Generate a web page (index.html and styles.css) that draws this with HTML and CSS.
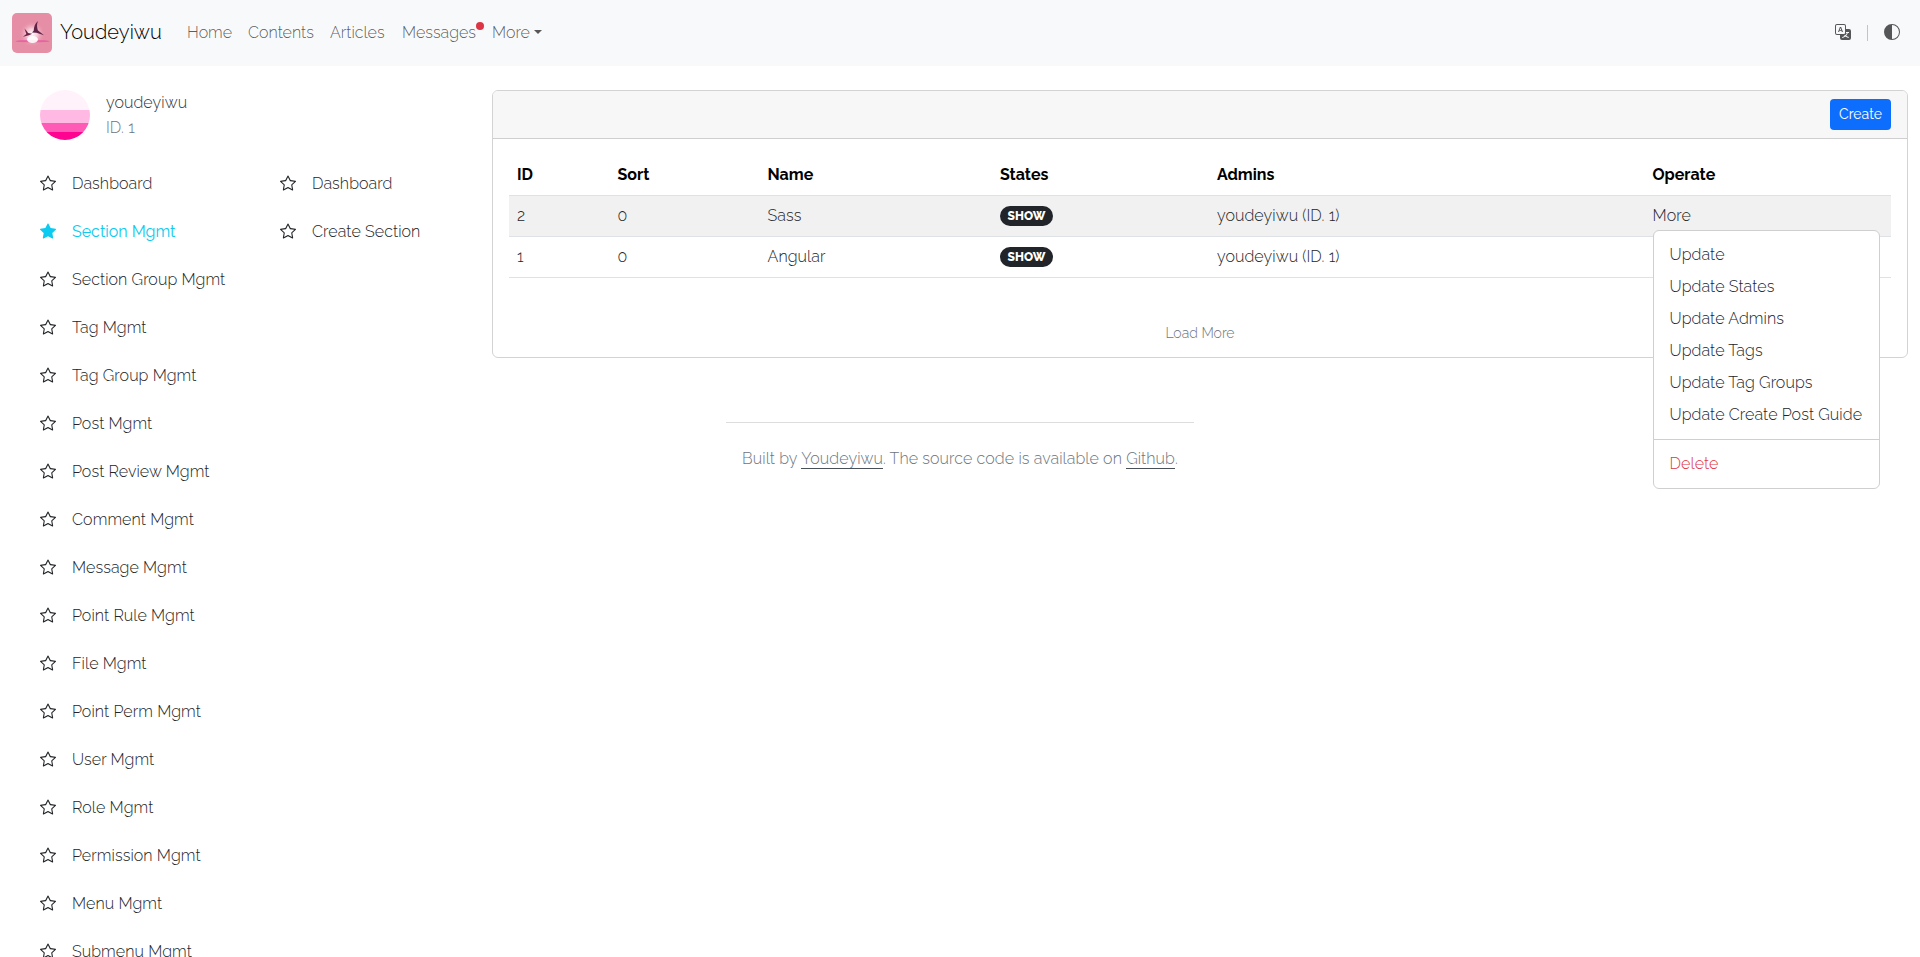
FILE: index.html
```
<!DOCTYPE html>
<html lang="en">
<head>
<meta charset="utf-8">
<title>Section Mgmt - Youdeyiwu</title>
<link rel="stylesheet" href="styles.css">
</head>
<body>
<svg class="defs" aria-hidden="true">
  <symbol id="star" viewBox="0 0 16 16"><path d="M2.866 14.85c-.078.444.36.791.746.593l4.39-2.256 4.389 2.256c.386.198.824-.149.746-.592l-.83-4.73 3.522-3.356c.33-.314.16-.888-.282-.95l-4.898-.696L8.465.792a.513.513 0 0 0-.927 0L5.354 5.12l-4.898.696c-.441.062-.612.636-.283.95l3.523 3.356-.83 4.73zm4.905-2.767-3.686 1.894.694-3.957a.565.565 0 0 0-.163-.505L1.71 6.745l4.052-.576a.525.525 0 0 0 .393-.288L8 2.223l1.847 3.658a.525.525 0 0 0 .393.288l4.052.575-2.906 2.77a.565.565 0 0 0-.163.506l.694 3.957-3.686-1.894a.503.503 0 0 0-.461 0z"/></symbol>
  <symbol id="star-fill" viewBox="0 0 16 16"><path d="M3.612 15.443c-.386.198-.824-.149-.746-.592l.83-4.73L.173 6.765c-.329-.314-.158-.888.283-.95l4.898-.696L7.538.792c.197-.39.73-.39.927 0l2.184 4.327 4.898.696c.441.062.612.636.282.95l-3.522 3.356.83 4.73c.078.443-.36.79-.746.592L8 13.187l-4.389 2.256z"/></symbol>
</svg>
<nav class="navbar">
  <a class="brand">
    <svg class="logo" viewBox="0 0 40 40">
      <defs><radialGradient id="glow"><stop offset="0" stop-color="#fff"/><stop offset=".4" stop-color="#fbe3ea" stop-opacity=".75"/><stop offset="1" stop-color="#e78fa8" stop-opacity="0"/></radialGradient></defs>
      <rect width="40" height="40" rx="5" fill="#e68ea6"/>
      <ellipse cx="20" cy="21" rx="13" ry="13" fill="url(#glow)"/>
      <ellipse cx="20.500" cy="28.200" rx="17" ry="1.300" fill="#e8509d" opacity=".7"/>
      <ellipse cx="20.500" cy="26.500" rx="5.500" ry="3.500" fill="#fff" opacity=".9"/>
      <path d="M26 8c-1.600 3.500-.900 6-.200 9.300l6.200 5-7.500-2.500-4.500-.300 1.700-1.800c.300-4.200 1.300-7.300 4.300-9.700z" fill="#5f2348"/>
      <path d="M12.500 15.500c1.500 1.700 2.700 2.800 3.500 4.500l4.300.800-3.300 1.400-6 1.600 3.300-2.800z" fill="#6f2349"/>
    </svg>
    <span>Youdeyiwu</span>
  </a>
  <ul class="nav-links">
    <li class="n-home">Home</li>
    <li class="n-contents">Contents</li>
    <li class="n-articles">Articles</li>
    <li class="n-messages">Messages<i class="dot"></i></li>
    <li class="n-more">More<i class="caret"></i></li>
  </ul>
  <div class="tools">
    <svg viewBox="0 0 16 16"><path d="M4.545 6.714 4.110 8H3l1.862-5h1.284L8 8H6.833l-.435-1.286H4.545zm1.634-.736L5.500 3.956h-.049l-.679 2.022H6.180z"/><path d="M0 2a2 2 0 0 1 2-2h7a2 2 0 0 1 2 2v3h3a2 2 0 0 1 2 2v7a2 2 0 0 1-2 2H7a2 2 0 0 1-2-2v-3H2a2 2 0 0 1-2-2V2zm2-1a1 1 0 0 0-1 1v7a1 1 0 0 0 1 1h7a1 1 0 0 0 1-1V2a1 1 0 0 0-1-1H2zm7.138 9.995c.193.301.402.583.63.846-.748.575-1.673 1.001-2.768 1.292.178.217.451.635.555.867 1.125-.359 2.080-.844 2.886-1.494.777.665 1.739 1.165 2.930 1.472.133-.254.414-.673.629-.890-1.125-.253-2.057-.694-2.820-1.284.681-.747 1.222-1.651 1.621-2.757H14V8h-3v1.047h.765c-.318.844-.740 1.546-1.272 2.130a6.066 6.066 0 0 1-.415-.492 1.988 1.988 0 0 1-.940.310z"/></svg>
    <span class="rule"></span>
    <svg viewBox="0 0 16 16"><path d="M8 15A7 7 0 1 0 8 1v14zm0 1A8 8 0 1 1 8 0a8 8 0 0 1 0 16z"/></svg>
  </div>
</nav>
<main class="page">
  <aside class="sidebar">
    <div class="profile">
      <svg class="avatar" viewBox="0 0 50 50"><defs><clipPath id="round"><circle cx="25" cy="25" r="25"/></clipPath></defs><g clip-path="url(#round)"><path fill="#fff2fa" d="M0 0h50v20H0z"/><path fill="#ffb9e2" d="M0 20h50v13H0z"/><path fill="#ff5ab6" d="M0 33h50v9H0z"/><path fill="#ff0490" d="M0 42h50v8H0z"/></g></svg>
      <div><div class="user">youdeyiwu</div><div class="uid">ID. 1</div></div>
    </div>
    <div class="menus">
      <ul class="menu">
        <li><svg><use href="#star"/></svg>Dashboard</li>
        <li class="active"><svg><use href="#star-fill"/></svg>Section Mgmt</li>
        <li><svg><use href="#star"/></svg>Section Group Mgmt</li>
        <li><svg><use href="#star"/></svg>Tag Mgmt</li>
        <li><svg><use href="#star"/></svg>Tag Group Mgmt</li>
        <li><svg><use href="#star"/></svg>Post Mgmt</li>
        <li><svg><use href="#star"/></svg>Post Review Mgmt</li>
        <li><svg><use href="#star"/></svg>Comment Mgmt</li>
        <li><svg><use href="#star"/></svg>Message Mgmt</li>
        <li><svg><use href="#star"/></svg>Point Rule Mgmt</li>
        <li><svg><use href="#star"/></svg>File Mgmt</li>
        <li><svg><use href="#star"/></svg>Point Perm Mgmt</li>
        <li><svg><use href="#star"/></svg>User Mgmt</li>
        <li><svg><use href="#star"/></svg>Role Mgmt</li>
        <li><svg><use href="#star"/></svg>Permission Mgmt</li>
        <li><svg><use href="#star"/></svg>Menu Mgmt</li>
        <li><svg><use href="#star"/></svg>Submenu Mgmt</li>
      </ul>
      <ul class="menu">
        <li><svg><use href="#star"/></svg>Dashboard</li>
        <li><svg><use href="#star"/></svg>Create Section</li>
      </ul>
    </div>
  </aside>
  <section class="content">
    <div class="card">
      <header class="card-head"><button class="create">Create</button></header>
      <div class="card-body">
        <table class="table">
          <colgroup><col class="c1"><col class="c2"><col class="c3"><col class="c4"><col class="c5"><col></colgroup>
          <thead><tr><th>ID</th><th>Sort</th><th>Name</th><th>States</th><th>Admins</th><th>Operate</th></tr></thead>
          <tbody>
            <tr class="hover"><td>2</td><td>0</td><td>Sass</td><td><span class="badge">SHOW</span></td><td>youdeyiwu (ID. 1)</td>
              <td><div class="dropdown">More
                <ul class="dropdown-menu">
                  <li>Update</li><li>Update States</li><li>Update Admins</li><li>Update Tags</li><li>Update Tag Groups</li><li>Update Create Post Guide</li>
                  <li class="divider"></li>
                  <li class="danger">Delete</li>
                </ul></div></td></tr>
            <tr><td>1</td><td>0</td><td>Angular</td><td><span class="badge">SHOW</span></td><td>youdeyiwu (ID. 1)</td><td>More</td></tr>
          </tbody>
        </table>
        <div class="load">Load More</div>
      </div>
    </div>
  </section>
</main>
<footer class="footer"><p>Built by <a>Youdeyiwu</a>. The source code is available on <a>Github</a>.</p></footer>
</body>
</html>
```

FILE: styles.css
```
* { box-sizing: border-box; }
body { margin: 0; height: 957px; overflow: hidden; display: grid; grid-template-rows: 66px 292px auto; align-content: start; background: #fff; color: #212529; font: 300 16px/24px Raleway, Lato, "Open Sans", sans-serif; letter-spacing: .08px; }
ul { list-style: none; margin: 0; padding: 0; }
svg { fill: currentColor; flex: none; }
.defs { display: none; }
.navbar { background: #f8f9fa; display: flex; align-items: center; padding: 0 20px 0 12px; letter-spacing: 0; }
.brand { display: flex; align-items: center; gap: 8px; width: 167px; color: #000; font-size: 20px; line-height: 30px; letter-spacing: .08px; }
.brand span { margin-top: -3px; }
.logo { width: 40px; height: 40px; }
.nav-links { display: flex; color: rgba(0, 0, 0, .65); white-space: nowrap; }
.nav-links li { position: relative; padding-left: 8px; }
.n-home { width: 61px; }
.n-contents { width: 82px; }
.n-articles { width: 72px; }
.n-messages { width: 90px; }
.dot { position: absolute; right: 0; top: 1px; width: 8px; height: 8px; border-radius: 50%; background: #dc3545; }
.caret { display: inline-block; margin-left: 4px; vertical-align: 4px; border: 4px solid transparent; border-top-color: currentColor; border-bottom: 0; }
.tools { margin-left: auto; display: flex; align-items: center; gap: 16px; color: #555657; }
.tools svg { width: 16px; height: 16px; margin-top: -2px; }
.rule { width: 1px; height: 16px; background: #c3c4c6; }
.page { display: flex; padding: 24px 12px 0 40px; align-items: flex-start; }
.sidebar { width: 452px; flex: none; color: #212529; }
.profile { display: flex; gap: 16px; height: 69px; color: #333; }
.avatar { width: 50px; height: 50px; }
.user, .uid { height: 25px; line-height: 26px; }
.uid { color: #6c757d; }
.menus { display: flex; }
.menu { width: 240px; flex: none; }
.menu li { display: flex; align-items: center; gap: 16px; height: 48px; padding-top: 1px; white-space: nowrap; }
.menu svg { width: 16px; height: 16px; margin-top: -1px; }
.active { color: #0dcaf0; font-weight: 400; letter-spacing: 0; }
.content { flex: 1; }
.card { height: 268px; border: 1px solid #d3d3d4; border-radius: 6px; }
.card-head { display: flex; justify-content: flex-end; padding: 8px 16px; height: 48px; background: #f7f7f7; border-bottom: 1px solid #cfcfcf; border-radius: 5px 5px 0 0; }
.create { width: 61px; height: 31px; padding: 0; border: 0; border-radius: 4px; background: #0d6efd; color: #fff; font: 400 14px/21px Raleway, Lato, sans-serif; }
.card-body { padding: 16px; }
.table { width: 100%; table-layout: fixed; border-collapse: separate; border-spacing: 0; }
.c1 { width: 100.500px; }
.c2 { width: 150px; }
.c3 { width: 232.500px; }
.c4 { width: 217px; }
.c5 { width: 435.600px; }
th, td { padding: 8px; height: 41px; border-bottom: 1px solid #dee2e6; text-align: left; white-space: nowrap; }
th { color: #000; font-weight: 700; letter-spacing: 0; }
.hover td { background: #f1f1f1; }
.badge { display: block; width: 53px; height: 20px; border-radius: 10px; background: #212529; color: #fff; font-size: 12px; font-weight: 800; line-height: 20px; text-align: center; letter-spacing: 0; }
.dropdown { position: relative; }
.dropdown-menu { position: absolute; top: 26px; left: 0; width: 227px; height: 259px; padding: 8px 0; background: #fff; border: 1px solid #cfcfcf; border-radius: 6px; z-index: 2; }
.dropdown-menu li { padding: 4px 16px; height: 32px; }
.dropdown-menu .divider { height: 1px; margin: 8px 0; padding: 0; background: #cfcfcf; }
.dropdown-menu .danger { color: #dc3545; }
.load { margin-top: 45px; text-align: center; font-size: 14px; line-height: 21px; letter-spacing: 0; color: #6c757d; }
.footer { width: 468px; justify-self: center; margin-top: 64px; border-top: 1px solid #dcdddd; color: #6c757d; text-align: center; white-space: nowrap; }
.footer p { margin: 24px 0 0; }
.footer a { display: inline-block; line-height: 19px; border-bottom: 1px solid #495057; }
```
